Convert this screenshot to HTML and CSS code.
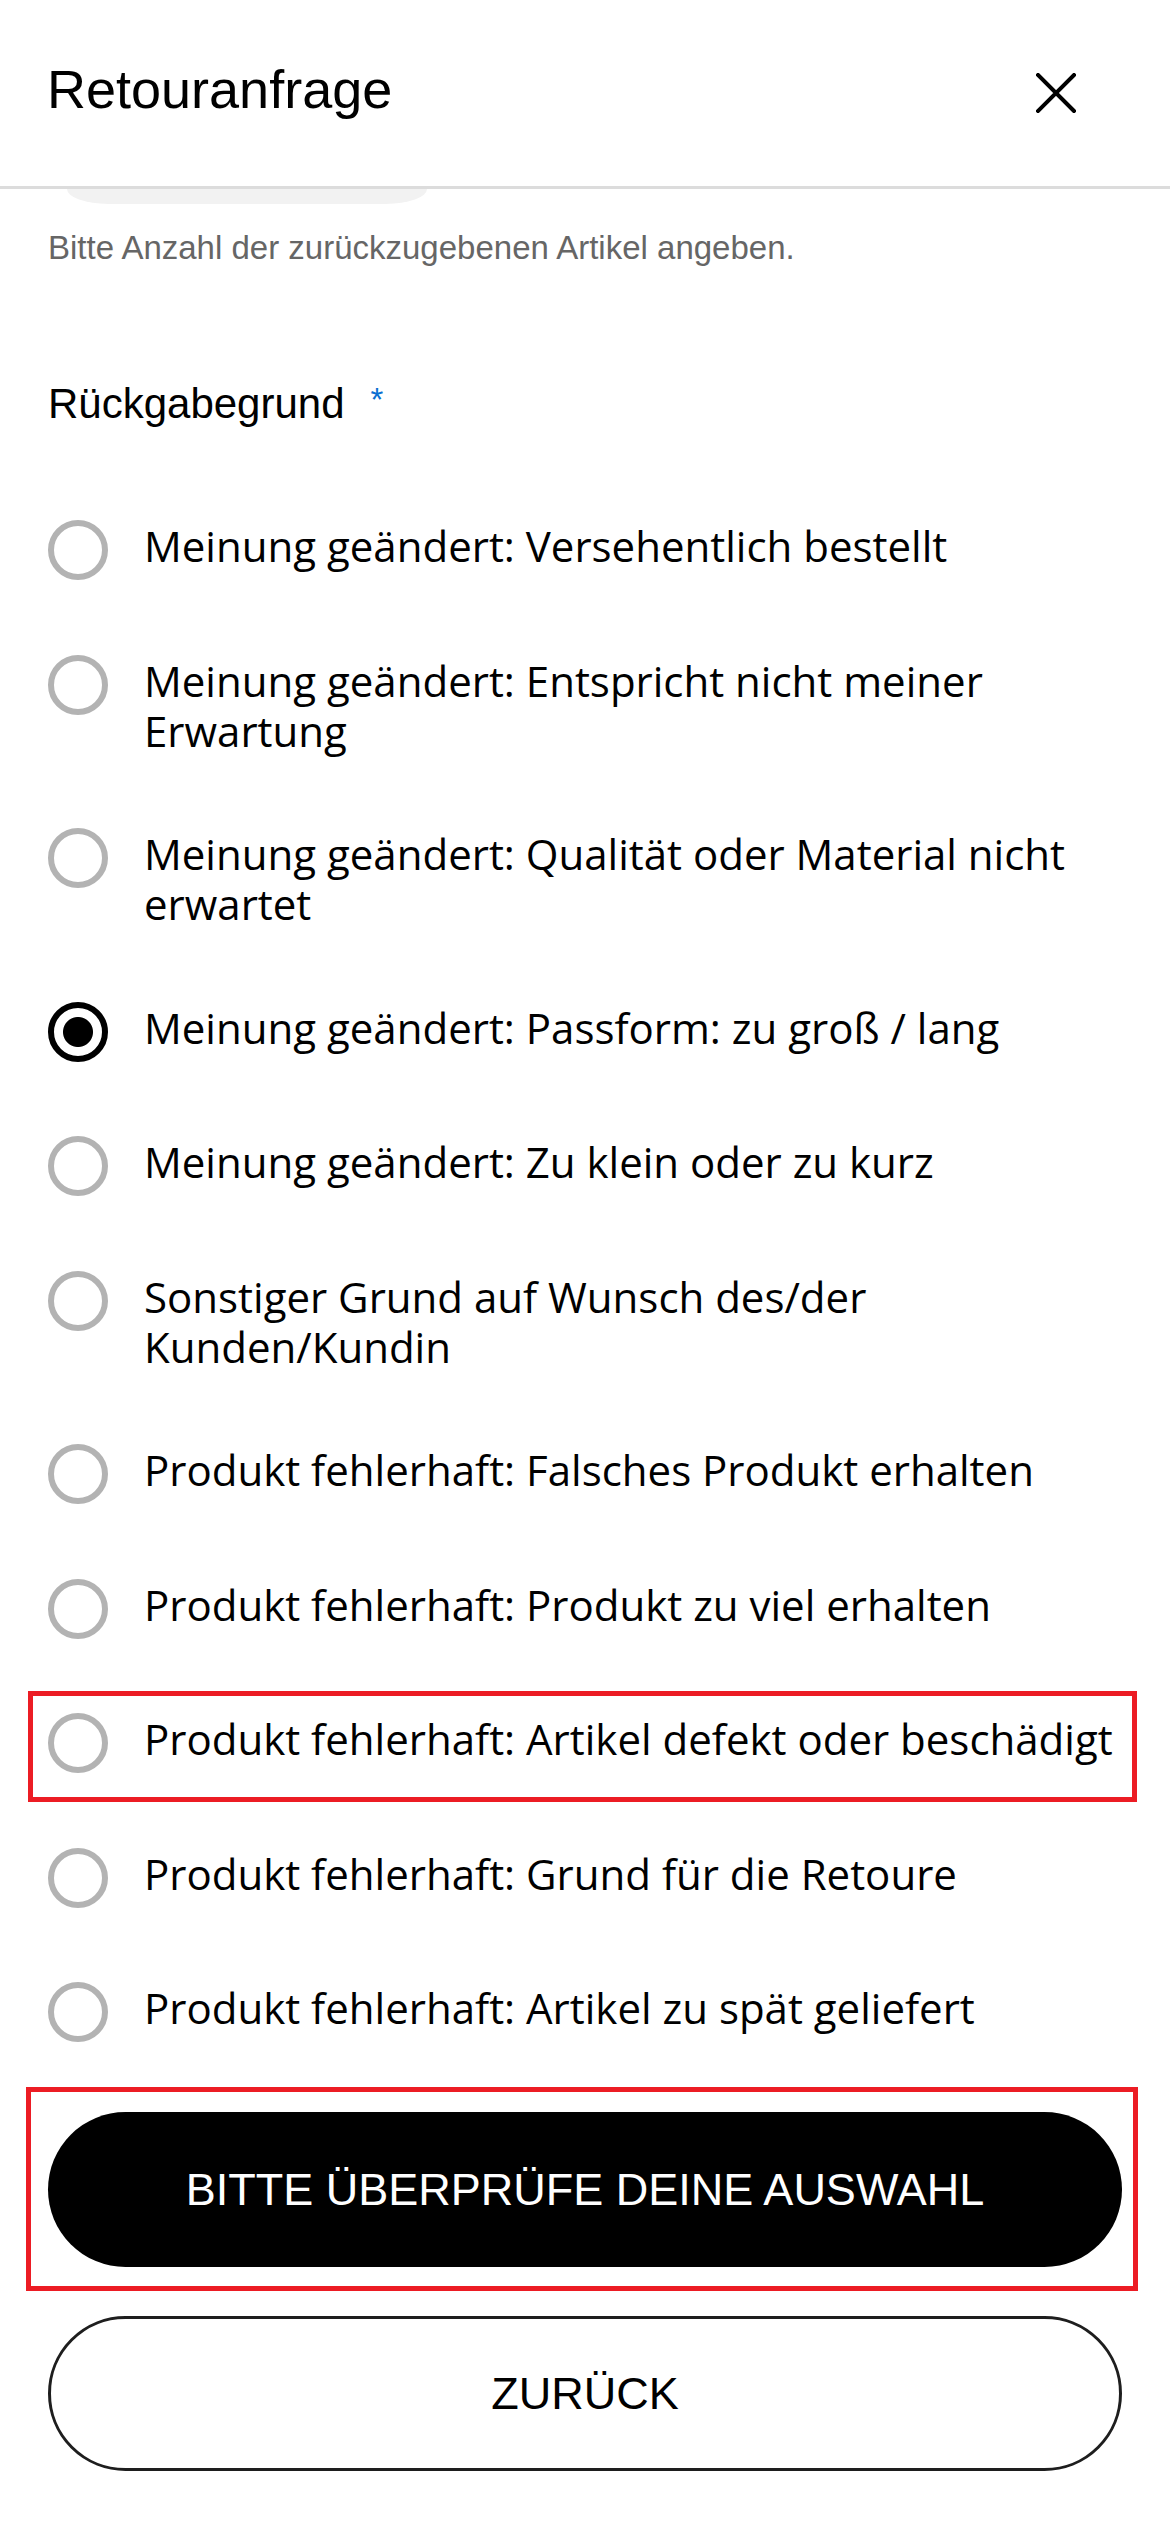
FILE: index.html
```html
<!DOCTYPE html>
<html lang="de">
<head>
<meta charset="utf-8">
<title>Retouranfrage</title>
<link rel="stylesheet" href="styles.css">
</head>
<body>
<header class="header">
  <h1 class="title">Retouranfrage</h1>
  <button class="close" type="button" aria-label="Schließen">
    <svg width="40" height="40" viewBox="0 0 40 40"><path d="M2 2 L38 38 M38 2 L2 38" stroke="#000" stroke-width="4" stroke-linecap="square" fill="none"/></svg>
  </button>
</header>
<main class="content">
  <div class="qty-pill"></div>
  <p class="hint">Bitte Anzahl der zurückzugebenen Artikel angeben.</p>
  <div class="label">Rückgabegrund<span class="req">*</span></div>
  <div class="options">
    <label class="option"><input class="radio" type="radio" name="reason"><span class="option-text">Meinung geändert: Versehentlich bestellt</span></label>
    <label class="option"><input class="radio" type="radio" name="reason"><span class="option-text">Meinung geändert: Entspricht nicht meiner Erwartung</span></label>
    <label class="option"><input class="radio" type="radio" name="reason"><span class="option-text">Meinung geändert: Qualität oder Material nicht erwartet</span></label>
    <label class="option"><input class="radio" type="radio" name="reason" checked><span class="option-text">Meinung geändert: Passform: zu groß / lang</span></label>
    <label class="option"><input class="radio" type="radio" name="reason"><span class="option-text">Meinung geändert: Zu klein oder zu kurz</span></label>
    <label class="option"><input class="radio" type="radio" name="reason"><span class="option-text">Sonstiger Grund auf Wunsch des/der Kunden/Kundin</span></label>
    <label class="option"><input class="radio" type="radio" name="reason"><span class="option-text">Produkt fehlerhaft: Falsches Produkt erhalten</span></label>
    <label class="option"><input class="radio" type="radio" name="reason"><span class="option-text">Produkt fehlerhaft: Produkt zu viel erhalten</span></label>
    <label class="option option-marked"><input class="radio" type="radio" name="reason"><span class="option-text">Produkt fehlerhaft: Artikel defekt oder beschädigt</span></label>
    <label class="option"><input class="radio" type="radio" name="reason"><span class="option-text">Produkt fehlerhaft: Grund für die Retoure</span></label>
    <label class="option"><input class="radio" type="radio" name="reason"><span class="option-text">Produkt fehlerhaft: Artikel zu spät geliefert</span></label>
  </div>
  <div class="actions">
    <button class="btn btn-primary btn-marked" type="button">Bitte überprüfe deine Auswahl</button>
    <button class="btn btn-secondary" type="button">Zurück</button>
  </div>
</main>
</body>
</html>
```
FILE: styles.css
```css
* { box-sizing: border-box; }

html, body {
  margin: 0;
  padding: 0;
  background: #fff;
  color: #000;
}

body {
  width: 1170px;
  font-family: "Liberation Sans", Arial, sans-serif;
}

.header {
  height: 189px;
  display: flex;
  align-items: flex-start;
  justify-content: space-between;
  padding: 59px 94px 0 47px;
  border-bottom: 3px solid #dcdcdc;
}

.title {
  margin: 0;
  font-size: 54px;
  line-height: 60px;
  font-weight: 400;
}

.close {
  margin-top: 14px;
  width: 40px;
  height: 40px;
  padding: 0;
  border: 0;
  background: none;
  display: block;
}

.close svg { display: block; }

.content {
  padding: 0 48px 60px 48px;
}

.qty-pill {
  margin-left: 19px;
  width: 360px;
  height: 15px;
  background: #f2f2f2;
  border-radius: 0 0 44px 44px / 0 0 16px 16px;
}

.hint {
  margin: 24px 0 0 0;
  font-size: 33px;
  line-height: 40px;
  color: #666;
}

.label {
  margin-top: 108px;
  font-size: 42px;
  line-height: 48px;
}

.req {
  display: inline-block;
  margin-left: 26px;
  font-size: 33px;
  color: #0b6fd1;
  vertical-align: 7px;
}

.options {
  margin-top: 92px;
  margin-right: -18px;
  display: flex;
  flex-direction: column;
  gap: 73.5px;
}

.option {
  position: relative;
  display: flex;
  align-items: flex-start;
  gap: 36px;
  font-family: "Open Sans", "Noto Sans", sans-serif;
  font-size: 42px;
  line-height: 50px;
  cursor: pointer;
}

.radio {
  appearance: none;
  -webkit-appearance: none;
  flex: 0 0 60px;
  width: 60px;
  height: 60px;
  margin: 0 0 1px 0;
  border: 6.5px solid #b3b3b3;
  border-radius: 50%;
  background: #fff;
}

.radio:checked {
  border-color: #000;
  background: radial-gradient(circle, #000 0 14.5px, #fff 15.5px);
}

.option-text {
  flex: 1 1 auto;
  padding-top: 1px;
  margin-bottom: -1px;
}

.option-marked::after,
.btn-marked::after {
  content: "";
  position: absolute;
  border: 5px solid #ec1c24;
  pointer-events: none;
}

.option-marked::after {
  top: -22px;
  bottom: -28px;
  left: -20px;
  right: 3px;
}

.actions {
  margin-top: 69px;
  display: flex;
  flex-direction: column;
  gap: 49px;
}

.btn {
  position: relative;
  width: 100%;
  height: 155px;
  border-radius: 78px;
  font-family: "Liberation Sans", Arial, sans-serif;
  font-size: 45px;
  text-transform: uppercase;
  cursor: pointer;
}

.btn-primary {
  background: #000;
  color: #fff;
  border: 0;
}

.btn-marked::after {
  top: -25px;
  bottom: -24px;
  left: -22px;
  right: -16px;
}

.btn-secondary {
  background: #fff;
  color: #000;
  border: 3px solid #1e1e1e;
}
```
